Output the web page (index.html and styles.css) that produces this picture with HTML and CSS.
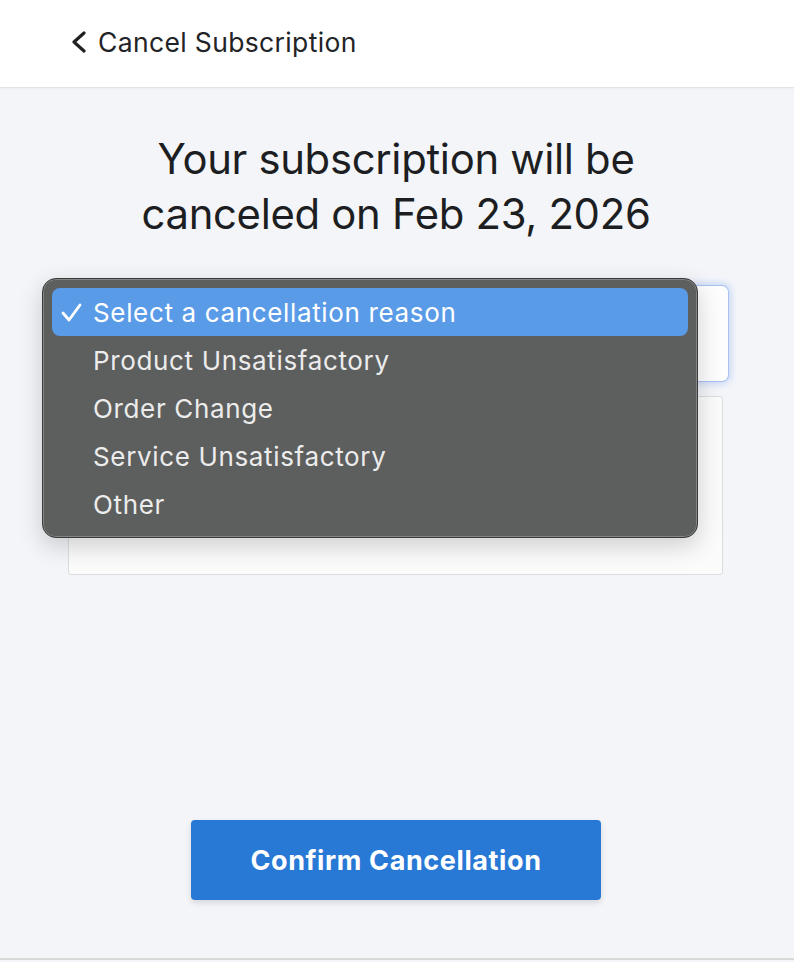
FILE: index.html
```html
<!DOCTYPE html>
<html lang="en">
<head>
<meta charset="utf-8">
<title>Cancel Subscription</title>
<link rel="stylesheet" href="styles.css">
</head>
<body>
<header class="topbar">
  <svg class="back" width="16" height="22" viewBox="0 0 16 22"><polyline points="13,2 3,11 13,20" fill="none" stroke="#222" stroke-width="3.2" stroke-linecap="round" stroke-linejoin="round"/></svg>
  <span class="topbar-title">Cancel Subscription</span>
</header>
<main class="page">
  <h1 class="headline">Your subscription will be<br>canceled on Feb 23, 2026</h1>
  <div class="form">
    <div class="select-box"></div>
    <div class="textarea-box"></div>
    <div class="menu">
      <div class="menu-item selected">
        <svg class="check" width="22" height="20" viewBox="0 0 22 20"><polyline points="2,10 8,17 19,2" fill="none" stroke="#fff" stroke-width="2.8" stroke-linecap="round" stroke-linejoin="round"/></svg>
        Select a cancellation reason
      </div>
      <div class="menu-item">Product Unsatisfactory</div>
      <div class="menu-item">Order Change</div>
      <div class="menu-item">Service Unsatisfactory</div>
      <div class="menu-item">Other</div>
    </div>
  </div>
  <div class="actions">
    <button class="confirm">Confirm Cancellation</button>
  </div>
</main>
</body>
</html>
```
FILE: styles.css
```css
* { box-sizing: border-box; }
html, body { margin: 0; padding: 0; }
body {
  font-family: Inter, "Noto Sans", sans-serif;
  background: #f3f5f9;
  color: #1f2024;
  width: 794px;
  height: 962px;
  overflow: hidden;
}
.topbar {
  height: 88px;
  background: #ffffff;
  display: flex;
  align-items: center;
  padding-left: 71px;
  gap: 11px;
  border-bottom: 1px solid #e2e4e8;
  box-shadow: 0 1px 3px rgba(0,0,0,0.04);
  padding-bottom: 3px;
}
.back { display: block; }
.topbar-title {
  font-size: 26.5px;
  color: #222326;
  letter-spacing: 0.35px;
}
.page {
  height: 872px;
  border-bottom: 2px solid #d8d8d8;
  padding-top: 44px;
}
.headline {
  margin: 0;
  text-align: center;
  font-weight: 400;
  font-size: 41.8px;
  line-height: 55px;
  color: #1d1e22;
  letter-spacing: -0.3px;
  padding-right: 2px;
}
.form {
  position: relative;
  margin-top: 44px;
  padding-left: 68px;
}
.select-box {
  width: 660px;
  height: 95px;
  background: #fdfdfe;
  border-radius: 6px;
  box-shadow: 0 0 0 1px rgba(120,160,235,0.45), 0 0 6px 3px rgba(120,160,240,0.35);
}
.textarea-box {
  margin-top: 15px;
  width: 655px;
  height: 179px;
  background: #fbfbfc;
  border: 1px solid #dcdde0;
  border-radius: 3px;
}
.menu {
  position: absolute;
  left: 42px;
  top: -8px;
  width: 656px;
  height: 260px;
  background: #5d5e5e;
  border: 1px solid #3a3a3a;
  border-radius: 14px;
  padding: 9px;
  box-shadow: 0 0 0 1px rgba(170,170,170,0.5) inset, 0 8px 24px rgba(0,0,0,0.18);
}
.menu-item {
  position: relative;
  height: 48px;
  display: flex;
  align-items: center;
  padding-left: 41px;
  font-size: 26px;
  color: #ececec;
  letter-spacing: 0.65px;
}
.menu-item.selected {
  background: #5a9be7;
  border-radius: 8px;
  color: #ffffff;
}
.check {
  position: absolute;
  left: 9px;
  top: 15px;
}
.actions {
  margin-top: 245px;
  display: flex;
  justify-content: center;
  padding-right: 2px;
}
.confirm {
  width: 410px;
  height: 80px;
  background: #2878d6;
  border: none;
  border-radius: 4px;
  color: #ffffff;
  font-family: Inter, "Noto Sans", sans-serif;
  font-weight: 700;
  font-size: 27px;
  letter-spacing: 0.6px;
  box-shadow: 0 3px 6px rgba(0,0,0,0.12);
}
```
